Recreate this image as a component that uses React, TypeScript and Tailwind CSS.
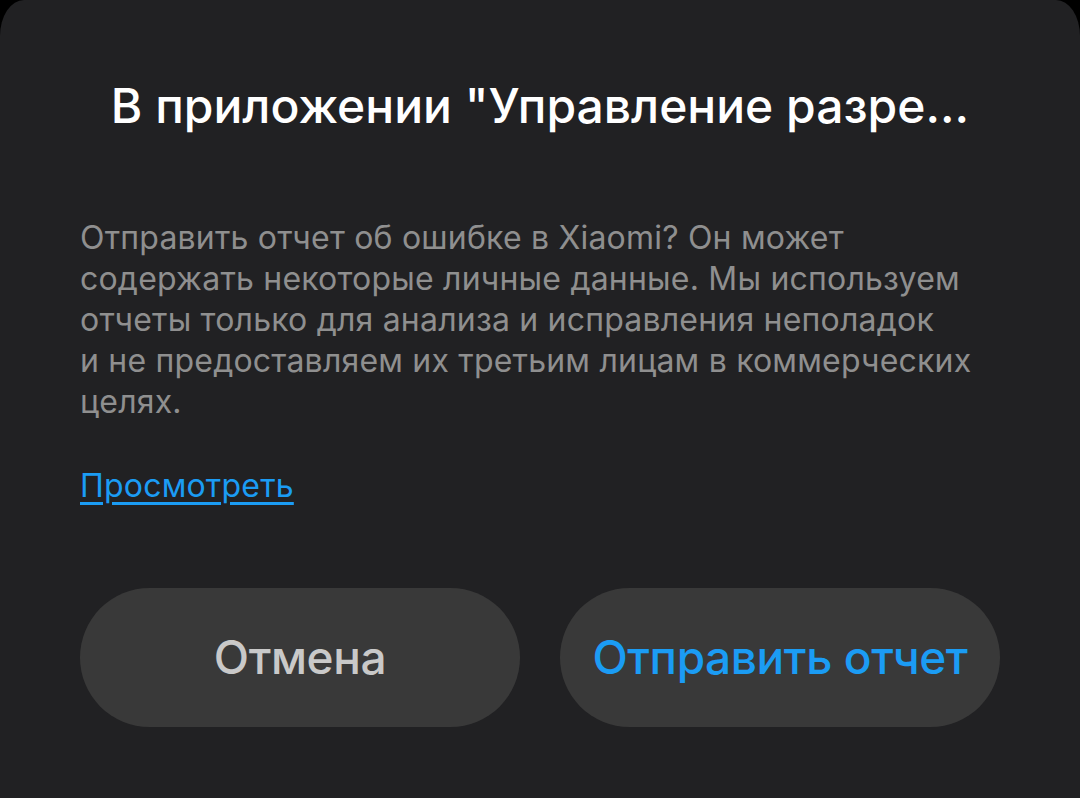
import React from "react";

const lines = [
  "Отправить отчет об ошибке в Xiaomi? Он может",
  "содержать некоторые личные данные. Мы используем",
  "отчеты только для анализа и исправления неполадок",
  "и не предоставляем их третьим лицам в коммерческих",
  "целях.",
];

export default function App() {
  return (
    <div className="w-[1080px] h-[798px] bg-black overflow-hidden font-['Inter',sans-serif]">
      <div className="h-full bg-[#212123] rounded-tl-[24px_36px] rounded-tr-[24px_36px] px-[80px] pt-[78px] flex flex-col">
        <h1 className="text-[48px] leading-[56px] font-medium text-white text-center whitespace-nowrap">
          В приложении "Управление разре...
        </h1>
        <p className="mt-[83px] text-[32px] leading-[41px] tracking-[0.2px] text-[#8f8f8f]">
          {lines.map((l) => (
            <span key={l} className="block whitespace-nowrap">
              {l}
            </span>
          ))}
        </p>
        <div className="mt-[43px] flex">
          <a className="text-[32px] leading-[41px] tracking-[0.2px] text-[#1b9cf4] underline underline-offset-[5px] decoration-[3px]">
            Просмотреть
          </a>
        </div>
        <div className="mt-[82px] grid grid-cols-2 gap-[40px]">
          <button className="h-[139px] rounded-full bg-[#393939] text-[46px] tracking-[-0.4px] font-medium text-[#c9c9c9]">
            Отмена
          </button>
          <button className="h-[139px] rounded-full bg-[#393939] text-[46px] tracking-[-0.4px] font-medium text-[#1b9cf4]">
            Отправить отчет
          </button>
        </div>
      </div>
    </div>
  );
}
